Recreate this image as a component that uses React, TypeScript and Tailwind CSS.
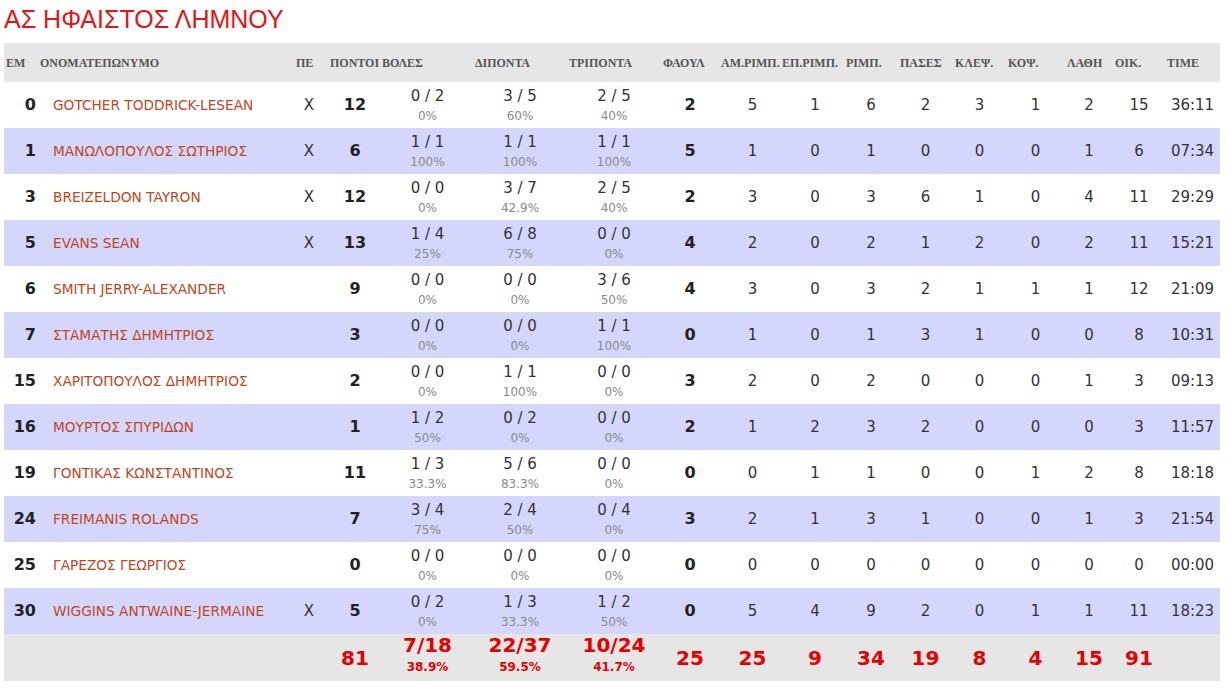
import React from "react";

type Shot = [string, string];
type Row = {
  no: string;
  name: string;
  starter: boolean;
  pts: number;
  ft: Shot;
  fg2: Shot;
  fg3: Shot;
  fouls: number;
  oreb: number;
  dreb: number;
  reb: number;
  ast: number;
  stl: number;
  blk: number;
  tov: number;
  eff: number;
  time: string;
};

const ROWS: Row[] = [
  { no: "0", name: "GOTCHER TODDRICK-LESEAN", starter: true, pts: 12, ft: ["0 / 2", "0%"], fg2: ["3 / 5", "60%"], fg3: ["2 / 5", "40%"], fouls: 2, oreb: 5, dreb: 1, reb: 6, ast: 2, stl: 3, blk: 1, tov: 2, eff: 15, time: "36:11" },
  { no: "1", name: "ΜΑΝΩΛΟΠΟΥΛΟΣ ΣΩΤΗΡΙΟΣ", starter: true, pts: 6, ft: ["1 / 1", "100%"], fg2: ["1 / 1", "100%"], fg3: ["1 / 1", "100%"], fouls: 5, oreb: 1, dreb: 0, reb: 1, ast: 0, stl: 0, blk: 0, tov: 1, eff: 6, time: "07:34" },
  { no: "3", name: "BREIZELDON TAYRON", starter: true, pts: 12, ft: ["0 / 0", "0%"], fg2: ["3 / 7", "42.9%"], fg3: ["2 / 5", "40%"], fouls: 2, oreb: 3, dreb: 0, reb: 3, ast: 6, stl: 1, blk: 0, tov: 4, eff: 11, time: "29:29" },
  { no: "5", name: "EVANS SEAN", starter: true, pts: 13, ft: ["1 / 4", "25%"], fg2: ["6 / 8", "75%"], fg3: ["0 / 0", "0%"], fouls: 4, oreb: 2, dreb: 0, reb: 2, ast: 1, stl: 2, blk: 0, tov: 2, eff: 11, time: "15:21" },
  { no: "6", name: "SMITH JERRY-ALEXANDER", starter: false, pts: 9, ft: ["0 / 0", "0%"], fg2: ["0 / 0", "0%"], fg3: ["3 / 6", "50%"], fouls: 4, oreb: 3, dreb: 0, reb: 3, ast: 2, stl: 1, blk: 1, tov: 1, eff: 12, time: "21:09" },
  { no: "7", name: "ΣΤΑΜΑΤΗΣ ΔΗΜΗΤΡΙΟΣ", starter: false, pts: 3, ft: ["0 / 0", "0%"], fg2: ["0 / 0", "0%"], fg3: ["1 / 1", "100%"], fouls: 0, oreb: 1, dreb: 0, reb: 1, ast: 3, stl: 1, blk: 0, tov: 0, eff: 8, time: "10:31" },
  { no: "15", name: "ΧΑΡΙΤΟΠΟΥΛΟΣ ΔΗΜΗΤΡΙΟΣ", starter: false, pts: 2, ft: ["0 / 0", "0%"], fg2: ["1 / 1", "100%"], fg3: ["0 / 0", "0%"], fouls: 3, oreb: 2, dreb: 0, reb: 2, ast: 0, stl: 0, blk: 0, tov: 1, eff: 3, time: "09:13" },
  { no: "16", name: "ΜΟΥΡΤΟΣ ΣΠΥΡΙΔΩΝ", starter: false, pts: 1, ft: ["1 / 2", "50%"], fg2: ["0 / 2", "0%"], fg3: ["0 / 0", "0%"], fouls: 2, oreb: 1, dreb: 2, reb: 3, ast: 2, stl: 0, blk: 0, tov: 0, eff: 3, time: "11:57" },
  { no: "19", name: "ΓΟΝΤΙΚΑΣ ΚΩΝΣΤΑΝΤΙΝΟΣ", starter: false, pts: 11, ft: ["1 / 3", "33.3%"], fg2: ["5 / 6", "83.3%"], fg3: ["0 / 0", "0%"], fouls: 0, oreb: 0, dreb: 1, reb: 1, ast: 0, stl: 0, blk: 1, tov: 2, eff: 8, time: "18:18" },
  { no: "24", name: "FREIMANIS ROLANDS", starter: false, pts: 7, ft: ["3 / 4", "75%"], fg2: ["2 / 4", "50%"], fg3: ["0 / 4", "0%"], fouls: 3, oreb: 2, dreb: 1, reb: 3, ast: 1, stl: 0, blk: 0, tov: 1, eff: 3, time: "21:54" },
  { no: "25", name: "ΓΑΡΕΖΟΣ ΓΕΩΡΓΙΟΣ", starter: false, pts: 0, ft: ["0 / 0", "0%"], fg2: ["0 / 0", "0%"], fg3: ["0 / 0", "0%"], fouls: 0, oreb: 0, dreb: 0, reb: 0, ast: 0, stl: 0, blk: 0, tov: 0, eff: 0, time: "00:00" },
  { no: "30", name: "WIGGINS ANTWAINE-JERMAINE", starter: true, pts: 5, ft: ["0 / 2", "0%"], fg2: ["1 / 3", "33.3%"], fg3: ["1 / 2", "50%"], fouls: 0, oreb: 5, dreb: 4, reb: 9, ast: 2, stl: 0, blk: 1, tov: 1, eff: 11, time: "18:23" },
];

const COL_WIDTHS = [34, 254, 34, 54, 93, 94, 94, 58, 61, 64, 54, 55, 53, 59, 48, 52, 55];

const th = "text-left font-bold align-middle whitespace-nowrap";
const num = "text-center align-middle text-[15px] text-[#333]";
const tot = "text-center align-middle text-[20px] font-bold";

function ShotCell({ shot, className = "" }: { shot: Shot; className?: string }) {
  return (
    <td className={`text-center align-middle ${className}`}>
      <div className="text-[15px] leading-[20px] text-[#333]">{shot[0]}</div>
      <div className="mt-[2px] text-[12px] leading-[16px] text-[#8a8a8a]">{shot[1]}</div>
    </td>
  );
}

function TotalShot({ made, pct, className = "" }: { made: string; pct: string; className?: string }) {
  return (
    <td className={`pb-[5px] text-center align-middle ${className}`}>
      <div className="text-[20px] font-bold leading-[20px]">{made}</div>
      <div className="mt-[5px] text-[12px] font-bold leading-[15px]">{pct}</div>
    </td>
  );
}

export default function App() {
  return (
    <div className="min-h-screen bg-white pl-[4px] font-['DejaVu_Sans',Verdana,sans-serif]">
      <h1 className="h-[43px] pt-[5px] font-['Liberation_Sans',Arial,sans-serif] text-[25px] font-normal leading-[28px] text-[#e41414]">
        ΑΣ ΗΦΑΙΣΤΟΣ ΛΗΜΝΟΥ
      </h1>
      <table className="w-[1216px] table-fixed border-collapse">
        <colgroup>
          {COL_WIDTHS.map((w, i) => (
            <col key={i} style={{ width: w }} />
          ))}
        </colgroup>
        <thead>
          <tr className="h-[39px] bg-[#e6e6e6] font-['Liberation_Serif','Times_New_Roman',serif] text-[12px] text-[#555]">
            <th className={`${th} pl-[2px]`}>ΕΜ</th>
            <th className={`${th} pl-[2px]`}>ΟΝΟΜΑΤΕΠΩΝΥΜΟ</th>
            <th className={`${th} pl-[4px]`}>ΠΕ</th>
            <th className={`${th} pl-[4px]`}>ΠΟΝΤΟΙ</th>
            <th className={`${th} pl-[2px]`}>ΒΟΛΕΣ</th>
            <th className={`${th} pl-[2px]`}>ΔΙΠΟΝΤΑ</th>
            <th className={`${th} pl-[2px]`}>ΤΡΙΠΟΝΤΑ</th>
            <th className={`${th} pl-[2px]`}>ΦΑΟΥΛ</th>
            <th className={`${th} pl-[2px]`}>ΑΜ.ΡΙΜΠ.</th>
            <th className={`${th} pl-[2px]`}>ΕΠ.ΡΙΜΠ.</th>
            <th className={`${th} pl-[2px]`}>ΡΙΜΠ.</th>
            <th className={`${th} pl-[2px]`}>ΠΑΣΕΣ</th>
            <th className={`${th} pl-[2px]`}>ΚΛΕΨ.</th>
            <th className={`${th} pl-[2px]`}>ΚΟΨ.</th>
            <th className={`${th} pl-[2px]`}>ΛΑΘΗ</th>
            <th className={`${th} pl-[2px]`}>ΟΙΚ.</th>
            <th className={`${th} pl-[2px]`}>TIME</th>
          </tr>
        </thead>
        <tbody>
          {ROWS.map((r, i) => (
            <tr key={r.no} className={`h-[46px] ${i % 2 === 1 ? "bg-[#d4d7fb]" : "bg-white"}`}>
              <td className="pr-[2px] text-right align-middle text-[16px] font-bold text-[#222]">{r.no}</td>
              <td className="pl-[15px] align-middle text-[13.7px] whitespace-nowrap text-[#c0461e]">{r.name}</td>
              <td className={num}>{r.starter ? "X" : ""}</td>
              <td className="pl-[4px] text-center align-middle text-[16px] font-bold text-[#222]">{r.pts}</td>
              <ShotCell shot={r.ft} className="pl-[2px]" />
              <ShotCell shot={r.fg2} />
              <ShotCell shot={r.fg3} />
              <td className="text-center align-middle text-[16px] font-bold text-[#222]">{r.fouls}</td>
              <td className={`${num} pl-[6px]`}>{r.oreb}</td>
              <td className={`${num} pl-[6px]`}>{r.dreb}</td>
              <td className={num}>{r.reb}</td>
              <td className={num}>{r.ast}</td>
              <td className={num}>{r.stl}</td>
              <td className={num}>{r.blk}</td>
              <td className={num}>{r.tov}</td>
              <td className={num}>{r.eff}</td>
              <td className={num}>{r.time}</td>
            </tr>
          ))}
          <tr className="h-[47px] bg-[#e6e6e6] text-[#e60000]">
            <td />
            <td />
            <td />
            <td className={`${tot} pl-[4px]`}>81</td>
            <TotalShot made="7/18" pct="38.9%" className="pl-[2px]" />
            <TotalShot made="22/37" pct="59.5%" />
            <TotalShot made="10/24" pct="41.7%" />
            <td className={tot}>25</td>
            <td className={`${tot} pl-[6px]`}>25</td>
            <td className={`${tot} pl-[6px]`}>9</td>
            <td className={tot}>34</td>
            <td className={tot}>19</td>
            <td className={tot}>8</td>
            <td className={tot}>4</td>
            <td className={tot}>15</td>
            <td className={tot}>91</td>
            <td />
          </tr>
        </tbody>
      </table>
    </div>
  );
}
